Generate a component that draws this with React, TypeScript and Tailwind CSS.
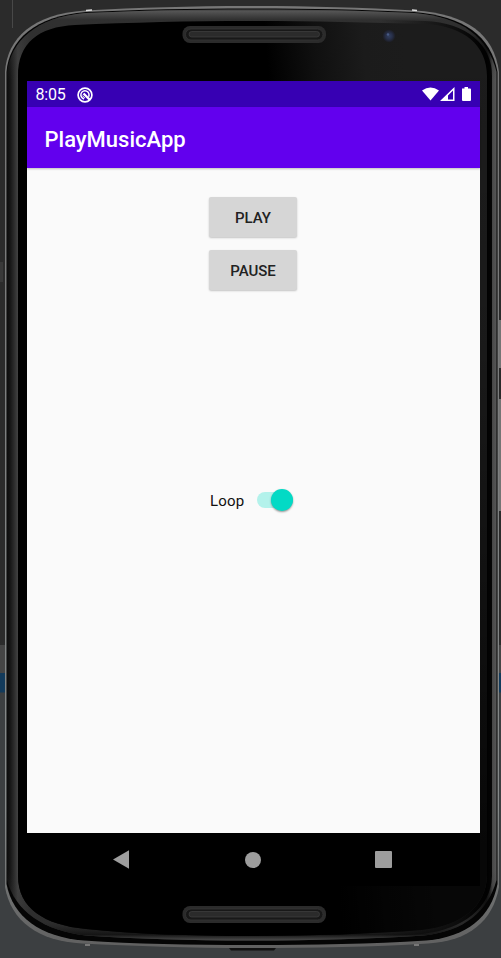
const OUTER =
  'M5 72 C7 38 33 14 85 10.5 C140 7.5 190 6 250 6 C310 6 360 7.5 415 10.5 C467 14 494 34 499 72 V887 C493 921 469 941 428 943.5 C370 947 310 948 250 948 C190 948 135 946 82 943.5 C38 941 11 921 5 887 Z';
const BODY =
  'M6.5 72 C9 40 35 16 86 12 C140 9.5 190 8.5 250 8.5 C310 8.5 360 9.5 414 12 C464 16 491 36 497.5 72 V884 C491 917 467 937 426 940.5 C370 944 310 945 250 945 C190 945 135 944 84 940.5 C40 937 13 917 6.5 884 Z';
const RIM =
  'M7 72 C11 41 36 17 86 13 C140 10.5 190 9.5 250 9.5 C310 9.5 360 10.5 414 13 C462 17 488 37 496.5 72 V880 C488 911 465 931 424 935.5 C370 939 310 940.5 250 940.5 C190 940.5 135 939 86 935.5 C44 931 15 911 7 880 Z';
const GLASS =
  'M18 76 C18 43 38 27 75 25 C130 22.5 190 21 250 21 C310 21 370 22.5 425 24 C465 26 487 46 487 76 V876 C486 906 462 926 422 930 C370 934 310 936 250 936 C190 936 135 934 86 929 C44 925 18 908 18 876 Z';

function Speaker({ y }: { y: number }) {
  return (
    <g>
      <rect x="182.5" y={y} width="143.5" height="17" rx="7.5" fill="#2b2b2b" />
      <rect x="185.5" y={y + 3} width="137.5" height="11" rx="5.5" fill="#181818" stroke="#353535" strokeWidth=".8" />
      <rect x="189" y={y + 5.5} width="130.5" height="5.5" rx="2.7" fill="#2b2b2b" stroke="#404040" strokeWidth=".7" />
    </g>
  );
}

function DeviceShell() {
  return (
    <svg className="absolute inset-0" width="501" height="958" viewBox="0 0 501 958" aria-hidden="true">
      <defs>
        <linearGradient id="side" gradientUnits="userSpaceOnUse" x1="6" y1="0" x2="498" y2="0">
          <stop offset="0" stopColor="#090909" />
          <stop offset=".008" stopColor="#151515" />
          <stop offset=".018" stopColor="#303030" />
          <stop offset=".024" stopColor="#424242" />
          <stop offset=".05" stopColor="#303030" />
          <stop offset=".93" stopColor="#262626" />
          <stop offset=".976" stopColor="#000" />
          <stop offset=".983" stopColor="#191919" />
          <stop offset=".989" stopColor="#494949" />
          <stop offset=".997" stopColor="#575757" />
          <stop offset="1" stopColor="#222" />
        </linearGradient>
        <linearGradient id="cap" gradientUnits="userSpaceOnUse" x1="0" y1="9" x2="0" y2="80">
          <stop offset="0" stopColor="#333" />
          <stop offset=".03" stopColor="#555" />
          <stop offset=".15" stopColor="#303030" />
          <stop offset=".4" stopColor="#303030" stopOpacity=".5" />
          <stop offset="1" stopColor="#333" stopOpacity="0" />
        </linearGradient>
        <linearGradient id="foot" gradientUnits="userSpaceOnUse" x1="0" y1="870" x2="0" y2="941">
          <stop offset="0" stopColor="#333" stopOpacity="0" />
          <stop offset=".75" stopColor="#2a2a2a" stopOpacity=".6" />
          <stop offset=".91" stopColor="#151515" />
          <stop offset="1" stopColor="#515151" />
        </linearGradient>
        <linearGradient id="sheen" gradientUnits="userSpaceOnUse" x1="262" y1="0" x2="400" y2="-12">
          <stop offset="0" stopColor="#000" />
          <stop offset=".35" stopColor="#101010" />
          <stop offset=".7" stopColor="#1b1b1b" />
          <stop offset="1" stopColor="#1c1c1c" />
        </linearGradient>
        <linearGradient id="shade" gradientUnits="userSpaceOnUse" x1="380" y1="0" x2="480" y2="0">
          <stop offset="0" stopColor="#000" stopOpacity="0" />
          <stop offset="1" stopColor="#000" stopOpacity=".9" />
        </linearGradient>
        <linearGradient id="fall" x1="0" y1="0" x2="0" y2="1">
          <stop offset="0" stopColor="#000" stopOpacity="0" />
          <stop offset=".35" stopColor="#000" stopOpacity=".1" />
          <stop offset=".9" stopColor="#000" stopOpacity=".75" />
          <stop offset="1" stopColor="#000" stopOpacity=".75" />
        </linearGradient>
        <linearGradient id="edge" x1="0" y1="0" x2="0" y2="1">
          <stop offset="0" stopColor="#777" />
          <stop offset=".15" stopColor="#777" />
          <stop offset=".85" stopColor="#858989" />
          <stop offset="1" stopColor="#606060" />
        </linearGradient>
        <radialGradient id="lens">
          <stop offset="0" stopColor="#33405f" />
          <stop offset=".5" stopColor="#272f49" />
          <stop offset="1" stopColor="#1b1b1e" />
        </radialGradient>
      </defs>
      <path d="M12.5 0V28" stroke="#484848" />
      <path d="M0 262H3V282H0Z" fill="#393939" />
      <path d="M0 645H5V673H0ZM499 645H501V673H499Z" fill="#454545" />
      <path d="M0 673H5V692.5H0ZM499 673H501V692.5H499Z" fill="#123a5b" />
      <path d="M499 320H501V368H499ZM499 399H501V511H499Z" fill="#747474" />
      <path d="M499 370H501V397H499Z" fill="#292929" />
      <path d="M229 948H276L274 950.5H231Z" fill="#111" />
      <path d={OUTER} fill="url(#edge)" />
      <path d={BODY} fill="#050505" />
      <path d={RIM} fill="url(#side)" />
      <path d={RIM} fill="url(#cap)" />
      <path d={RIM} fill="url(#foot)" />
      <path
        d="M250 21C310 21 370 22.5 425 24C465 26 489 46 489 76V876C488 906 462 926 422 931C370 935 310 937 250 937"
        fill="none"
        stroke="url(#shade)"
        strokeWidth="6"
      />
      <path d={GLASS} fill="url(#sheen)" />
      <path d={GLASS} fill="url(#fall)" />
      <path d="M86 10.5L92 10M412 10L417 10.5" stroke="#ddd" strokeWidth="1.4" />
      <path d="M85 945H90M414 945H419" stroke="#777" strokeWidth="2" />
      <Speaker y={26} />
      <Speaker y={906} />
      <circle cx="389" cy="36" r="6.5" fill="url(#lens)" />
      <circle cx="388" cy="34.5" r="1.2" fill="#485a84" />
    </svg>
  );
}

function StatusBar() {
  return (
    <div className="flex h-[26px] shrink-0 items-center bg-[#3700b3] pt-px pr-2 pl-[8.5px] text-white">
      <span className="w-[30px] pt-px text-[16px] leading-none tracking-[-0.2px]">8:05</span>
      <svg className="ml-[11px]" width="16" height="16" viewBox="0 0 16 16" fill="none" stroke="currentColor">
        <circle cx="8" cy="8" r="6.9" strokeWidth="1.7" />
        <path d="M11.6 9.8A4.1 4.1 0 1 0 7 11.9" strokeWidth="1.5" />
        <path d="M6.5 6.5L13 13" strokeWidth="2.4" />
        <path d="M5.5 8.8L8 11.2" strokeWidth="1" />
      </svg>
      <svg className="ml-auto" width="50" height="16" viewBox="0 0 50 16" fill="currentColor">
        <path d="M0 3.5Q8.5-2.5 17 3.5L8.5 13.5Z" />
        <path fillRule="evenodd" d="M18 14L32.5 0V14ZM26 12.5H31V3.5L26 8.5Z" />
        <path d="M40 1.5H42.5V0H46V1.5H48Q49 1.5 49 2.5V13Q49 14 48 14H41Q40 14 40 13Z" />
      </svg>
    </div>
  );
}

function RaisedButton({ children }: { children: string }) {
  return (
    <button className="h-10 w-[88px] rounded-[2px] bg-[#d6d6d6] pt-[2px] text-[15px] leading-none font-medium text-[#222] shadow-[0_1px_2px_rgba(0,0,0,0.22)]">
      {children}
    </button>
  );
}

export default function App() {
  return (
    <div className="relative h-[958px] w-[501px] overflow-hidden bg-linear-to-b from-[#2b2b2b] from-[67%] to-[#3c3f41] to-[72%] font-['Roboto','Liberation_Sans',sans-serif]">
      <DeviceShell />
      <div className="relative flex h-full flex-col pt-[81px] pr-[21px] pb-[72px] pl-[27px]">
        <StatusBar />
        <header className="z-10 flex h-[61px] shrink-0 items-center bg-[#6200ee] pt-[4px] pl-[17.5px] shadow-[0_1px_2px_rgba(0,0,0,0.25)]">
          <h1 className="text-[22px] leading-none font-medium text-white">PlayMusicApp</h1>
        </header>
        <main className="flex min-h-0 flex-1 flex-col bg-[#fafafa] pt-[29px] pl-[182px]">
          <div className="flex flex-col gap-[13px]">
            <RaisedButton>PLAY</RaisedButton>
            <RaisedButton>PAUSE</RaisedButton>
          </div>
          <label className="mt-[196px] flex h-7 items-center pl-px">
            <span className="w-[46.5px] pt-[3px] text-[15px] leading-none tracking-[0.2px] text-[#111]">Loop</span>
            <span className="flex h-4 w-[36px] items-center justify-end rounded-full bg-[#b3f2eb]">
              <span className="size-[22px] rounded-full bg-[#03dac5] shadow-[0_1px_2px_rgba(0,0,0,0.4)]" />
            </span>
          </label>
        </main>
        <nav className="flex h-[53px] shrink-0 items-center bg-black text-[#9d9d9d]">
          <svg className="ml-[85px]" width="18" height="20" viewBox="0 0 18 20" fill="currentColor">
            <path d="M1 9.5L17 .3V18.7Z" />
          </svg>
          <span className="ml-[115px] size-4 rounded-full bg-current" />
          <span className="ml-[114px] size-[17px] rounded-[1px] bg-current" />
        </nav>
      </div>
    </div>
  );
}
